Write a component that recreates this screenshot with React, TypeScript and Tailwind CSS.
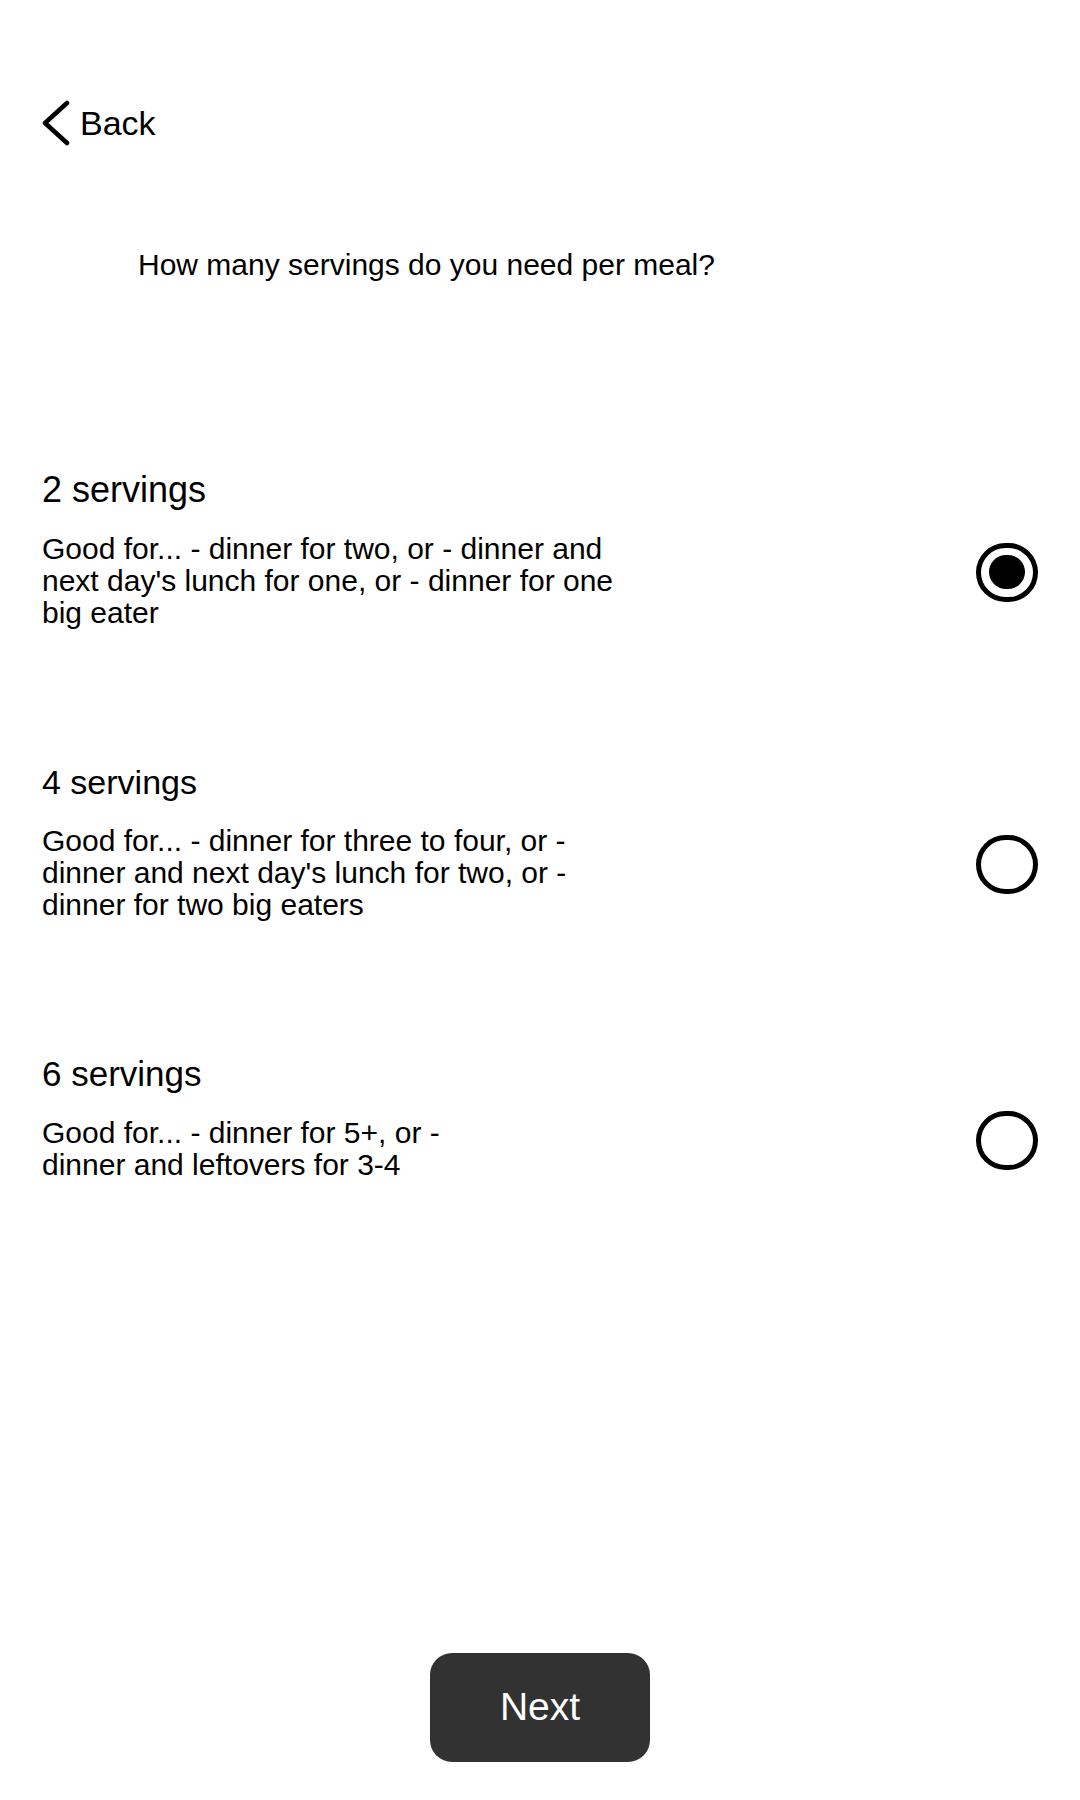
import { useState } from "react";

const options = [
  {
    id: 2,
    title: "2 servings",
    size: "text-[36px]",
    desc: "Good for... - dinner for two, or - dinner and next day's lunch for one, or - dinner for one big eater",
    width: "w-[600px]",
  },
  {
    id: 4,
    title: "4 servings",
    size: "text-[34px]",
    desc: "Good for... - dinner for three to four, or - dinner and next day's lunch for two, or - dinner for two big eaters",
    width: "w-[600px]",
  },
  {
    id: 6,
    title: "6 servings",
    size: "text-[35px]",
    desc: "Good for... - dinner for 5+, or - dinner and leftovers for 3-4",
    width: "w-[440px]",
  },
];

function Radio({ checked }: { checked: boolean }) {
  return (
    <div className="w-[62px] h-[59px] -mt-[18px] shrink-0 rounded-full border-[5px] border-black flex items-center justify-center">
      {checked && <div className="w-[36px] h-[34px] rounded-full bg-black" />}
    </div>
  );
}

export default function App() {
  const [selected, setSelected] = useState(2);

  return (
    <div className="h-[1800px] flex flex-col bg-white text-black px-[42px] font-['Liberation_Sans',Arial,sans-serif]">
      <button className="mt-[100px] flex items-center gap-[10px] self-start">
        <svg width="28" height="46" viewBox="0 0 28 46" fill="none">
          <path
            d="M25 3 L3 23 L25 43"
            stroke="black"
            strokeWidth="4.5"
            strokeLinecap="round"
            strokeLinejoin="round"
          />
        </svg>
        <span className="text-[34px] leading-[42px]">Back</span>
      </button>

      <h1 className="mt-[102px] ml-[96px] text-[30px] leading-[34px]">
        How many servings do you need per meal?
      </h1>

      <div className="mt-[188px] flex flex-col gap-[133px]">
        {options.map((o) => (
          <div key={o.id} className="cursor-pointer" onClick={() => setSelected(o.id)}>
            <h2 className={`${o.size} leading-[40px]`}>{o.title}</h2>
            <div className="mt-[23px] flex items-center justify-between">
              <p className={`${o.width} text-[30px] leading-[32px]`}>{o.desc}</p>
              <Radio checked={selected === o.id} />
            </div>
          </div>
        ))}
      </div>

      <button className="mt-auto mb-[38px] self-center w-[220px] h-[109px] rounded-[22px] bg-[#323232] text-white text-[39px]">
        Next
      </button>
    </div>
  );
}
